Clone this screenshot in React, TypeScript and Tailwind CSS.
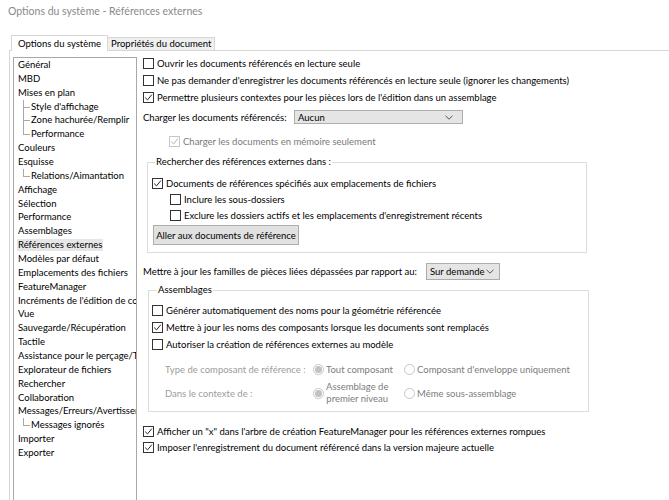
import React from "react";

const Box = ({ checked, disabled }: { checked?: boolean; disabled?: boolean }) => (
  <span
    className={
      disabled
        ? "flex-none w-[11px] h-[11px] border border-[#c6c6c6] bg-white flex items-center justify-center"
        : "flex-none w-[11px] h-[11px] border border-[#333333] bg-white flex items-center justify-center"
    }
  >
    {checked && (
      <svg width="9" height="9" viewBox="0 0 9 9">
        <path
          d="M1.2 4.6 L3.5 6.9 L7.9 1.6"
          fill="none"
          stroke={disabled ? "#b4b4b4" : "#222222"}
          strokeWidth="1"
        />
      </svg>
    )}
  </span>
);

const CheckRow = ({
  checked,
  disabled,
  label,
  cls,
}: {
  checked?: boolean;
  disabled?: boolean;
  label: string;
  cls: string;
}) => (
  <div className={"flex items-center gap-[3px] whitespace-nowrap " + cls}>
    <Box checked={checked} disabled={disabled} />
    <span className={disabled ? "text-[#7a7a7a]" : "text-[#000000]"}>{label}</span>
  </div>
);

const Radio = ({ selected }: { selected?: boolean }) => (
  <span className="flex-none w-[11px] h-[11px] rounded-full border border-[#c6c6c6] bg-white flex items-center justify-center">
    {selected && <span className="w-[7px] h-[7px] rounded-full bg-[#c2c2c2]" />}
  </span>
);

const Chevron = () => (
  <svg width="8" height="5" viewBox="0 0 8 5">
    <path d="M0.5 0.8 L4 4.2 L7.5 0.8" fill="none" stroke="#555555" strokeWidth="1" />
  </svg>
);

type Item = { t: string; child?: boolean; last?: boolean; sel?: boolean };

const items: Item[] = [
  { t: "Général" },
  { t: "MBD" },
  { t: "Mises en plan" },
  { t: "Style d'affichage", child: true },
  { t: "Zone hachurée/Remplir", child: true },
  { t: "Performance", child: true, last: true },
  { t: "Couleurs" },
  { t: "Esquisse" },
  { t: "Relations/Aimantation", child: true, last: true },
  { t: "Affichage" },
  { t: "Sélection" },
  { t: "Performance" },
  { t: "Assemblages" },
  { t: "Références externes", sel: true },
  { t: "Modèles par défaut" },
  { t: "Emplacements des fichiers" },
  { t: "FeatureManager" },
  { t: "Incréments de l'édition de cotes" },
  { t: "Vue" },
  { t: "Sauvegarde/Récupération" },
  { t: "Tactile" },
  { t: "Assistance pour le perçage/Taraudage" },
  { t: "Explorateur de fichiers" },
  { t: "Rechercher" },
  { t: "Collaboration" },
  { t: "Messages/Erreurs/Avertissements" },
  { t: "Messages ignorés", child: true, last: true },
  { t: "Importer" },
  { t: "Exporter" },
];

export default function App() {
  return (
    <div className="w-[669px] h-[500px] bg-white overflow-hidden [font-family:Lato,'Noto_Sans',sans-serif] text-[9.5px] text-[#000000] flex flex-col">
      {/* title */}
      <div className="h-[35px] flex-none pl-[8px] pt-[3px] text-[10.5px] leading-[16px] text-[#8a8a8a]">
        Options du système - Références externes
      </div>
      {/* tabs */}
      <div className="h-[15px] flex-none flex items-end pl-[11px]">
        <div className="relative z-10 -mb-px h-[16px] bg-white border border-b-0 border-[#d6d6d6] px-[6px] flex items-center text-[9.5px] leading-[14px] whitespace-nowrap">
          Options du système
        </div>
        <div className="h-[13px] bg-[#f0f0f0] border border-l-0 border-b-0 border-[#d6d6d6] px-[3px] flex items-center text-[9.5px] leading-[12px] whitespace-nowrap">
          Propriétés du document
        </div>
      </div>
      {/* frame */}
      <div className="flex-1 min-h-0 ml-[9px] border-t border-l border-[#d6d6d6] flex">
        {/* tree list */}
        <div className="flex-none ml-[3px] mt-[6px] w-[124px] h-[460px] border border-[#a9a9a9] overflow-hidden">
          {items.map((it, i) => (
            <div key={i} className="h-[13.86px] flex items-center whitespace-nowrap pl-[4px] leading-[12px]">
              {it.child && (
                <span className="relative flex-none w-[8px] h-full ml-[5px]">
                  <span
                    className={
                      it.last
                        ? "absolute left-0 top-0 w-px h-1/2 bg-[#a8a8a8]"
                        : "absolute left-0 top-0 w-px h-full bg-[#a8a8a8]"
                    }
                  />
                  <span className="absolute left-0 top-1/2 w-[7px] h-px bg-[#a8a8a8]" />
                </span>
              )}
              <span className={it.sel ? "-ml-px px-px bg-[#e6e6e6] h-[12px] leading-[12px]" : ""}>{it.t}</span>
            </div>
          ))}
        </div>
        {/* right panel */}
        <div className="flex-1 ml-[6px] pt-[4px] flex flex-col leading-[13px]">
          <CheckRow cls="h-[17px]" label="Ouvrir les documents référencés en lecture seule" />
          <CheckRow
            cls="h-[17px]"
            label="Ne pas demander d'enregistrer les documents référencés en lecture seule (ignorer les changements)"
          />
          <CheckRow
            cls="h-[17px]"
            checked
            label="Permettre plusieurs contextes pour les pièces lors de l'édition dans un assemblage"
          />
          <div className="h-[22px] flex items-center whitespace-nowrap">
            <span className="w-[151px] flex-none">Charger les documents référencés:</span>
            <div className="w-[169px] h-[14px] bg-[#e5e5e5] border border-[#adadad] flex items-center justify-between pl-[3px] pr-[9px]">
              <span>Aucun</span>
              <Chevron />
            </div>
          </div>
          <CheckRow cls="h-[26px] pl-[26px]" checked disabled label="Charger les documents en mémoire seulement" />

          <fieldset className="mt-[1px] ml-[4px] w-[440px] border border-[#dcdcdc] pl-[4px] pb-[7px]">
            <legend className="ml-[3px] px-px leading-[14px]">Rechercher des références externes dans :</legend>
            <div className="pt-[6px] flex flex-col">
              <CheckRow
                cls="h-[16px]"
                checked
                label="Documents de références spécifiés aux emplacements de fichiers"
              />
              <CheckRow cls="h-[16px] ml-[18px]" label="Inclure les sous-dossiers" />
              <CheckRow
                cls="h-[16px] ml-[18px]"
                label="Exclure les dossiers actifs et les emplacements d'enregistrement récents"
              />
              <div className="mt-[2px] ml-px w-[146px] h-[20px] bg-[#e1e1e1] border border-[#adadad] flex items-center justify-center whitespace-nowrap">
                Aller aux documents de référence
              </div>
            </div>
          </fieldset>

          <div className="mt-[7px] h-[22px] flex items-center whitespace-nowrap">
            <span className="w-[283px] flex-none">
              Mettre à jour les familles de pièces liées dépassées par rapport au:
            </span>
            <div className="w-[74px] h-[17px] bg-[#e5e5e5] border border-[#adadad] flex items-center justify-between pl-[3px] pr-[5px]">
              <span>Sur demande</span>
              <Chevron />
            </div>
          </div>

          <fieldset className="mt-[1px] ml-[5px] w-[441px] border border-[#dcdcdc] pl-[3px] pb-[5px]">
            <legend className="ml-[5px] px-px leading-[14px]">Assemblages</legend>
            <div className="pt-[5px] flex flex-col">
              <CheckRow cls="h-[17px]" label="Générer automatiquement des noms pour la géométrie référencée" />
              <CheckRow
                cls="h-[17px]"
                checked
                label="Mettre à jour les noms des composants lorsque les documents sont remplacés"
              />
              <CheckRow cls="h-[17px]" label="Autoriser la création de références externes au modèle" />
              <div className="mt-[6px] ml-[13px] h-[20px] flex items-center whitespace-nowrap text-[#7c7c7c]">
                <span className="w-[148px] flex-none text-[#9c9c9c]">Type de composant de référence :</span>
                <div className="w-[91px] flex-none flex items-center gap-[2px]">
                  <Radio selected />
                  <span>Tout composant</span>
                </div>
                <div className="flex items-center gap-[2px]">
                  <Radio />
                  <span>Composant d'enveloppe uniquement</span>
                </div>
              </div>
              <div className="mt-px ml-[13px] h-[26px] flex items-center whitespace-nowrap text-[#7c7c7c]">
                <span className="w-[148px] flex-none text-[#9c9c9c]">Dans le contexte de :</span>
                <div className="w-[91px] flex-none flex items-center gap-[2px]">
                  <Radio selected />
                  <span className="text-center leading-[12px]">
                    Assemblage de
                    <br />
                    premier niveau
                  </span>
                </div>
                <div className="flex items-center gap-[2px]">
                  <Radio />
                  <span>Même sous-assemblage</span>
                </div>
              </div>
            </div>
          </fieldset>

          <CheckRow
            cls="mt-[11px] h-[16px]"
            checked
            label={'Afficher un "x" dans l\'arbre de création FeatureManager pour les références externes rompues'}
          />
          <CheckRow
            cls="h-[17px]"
            checked
            label="Imposer l'enregistrement du document référencé dans la version majeure actuelle"
          />
        </div>
      </div>
    </div>
  );
}
